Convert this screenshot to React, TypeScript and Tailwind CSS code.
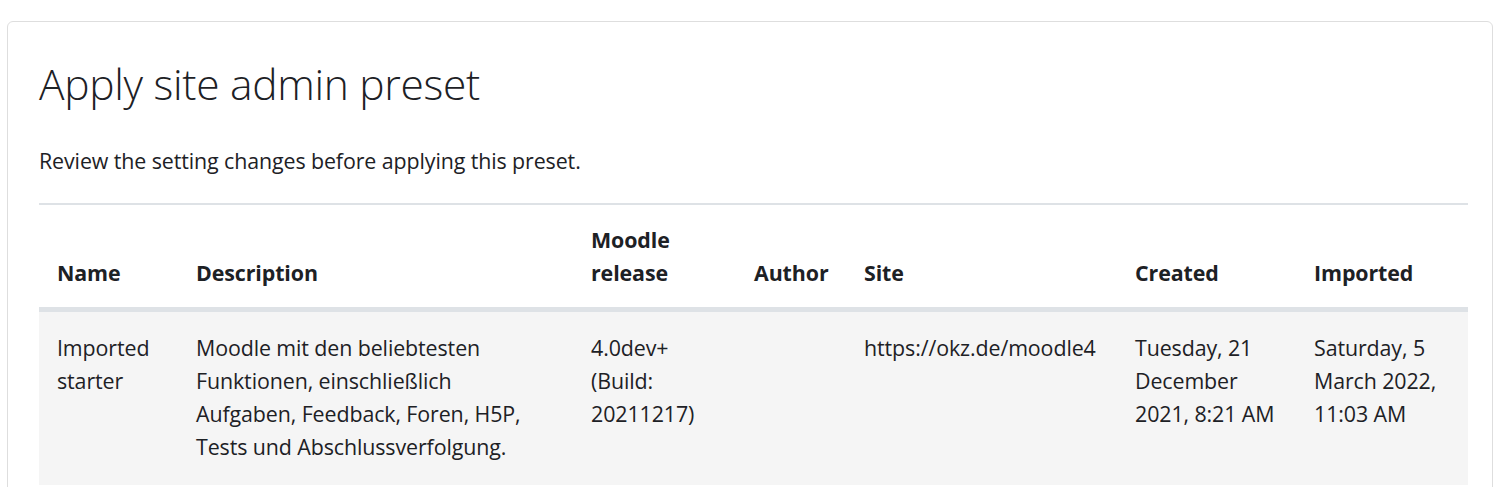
const rows = [
  {
    name: "Imported starter",
    description:
      "Moodle mit den beliebtesten Funktionen, einschließlich Aufgaben, Feedback, Foren, H5P, Tests und Abschlussverfolgung.",
    release: "4.0dev+ (Build: 20211217)",
    author: "",
    site: "https://okz.de/moodle4",
    created: "Tuesday, 21 December 2021, 8:21 AM",
    imported: "Saturday, 5 March 2022, 11:03 AM",
  },
];

export default function App() {
  return (
    <div className="bg-white h-[487px] overflow-hidden px-[7px] pt-[21px] font-['Open_Sans',sans-serif] text-[#1d2125]">
      <div className="border border-[#dedede] rounded-md px-[31px] pt-[36px] pb-[60px]">
        {/* Heading */}
        <h2 className="text-[42.5px] font-light leading-[1.2] tracking-[-0.3px] mb-[35px]">
          Apply site admin preset
        </h2>
        <p className="text-[21.4px] leading-[33px] mb-[26px] tracking-[-0.1px]">
          Review the setting changes before applying this preset.
        </p>

        {/* Preset table */}
        <table className="w-full table-fixed border-collapse text-[21.4px] leading-[33px] tracking-[-0.1px]">
          <colgroup>
            <col className="w-[139px]" />
            <col className="w-[395px]" />
            <col className="w-[163px]" />
            <col className="w-[110px]" />
            <col className="w-[271px]" />
            <col className="w-[179px]" />
            <col className="w-[172px]" />
          </colgroup>
          <thead>
            <tr className="border-t-2 border-b-[5px] border-[#dee2e6]">
              {["Name", "Description", "Moodle release", "Author", "Site", "Created", "Imported"].map((h) => (
                <th key={h} className="px-[18px] pt-[18px] pb-[18px] text-left align-bottom font-bold">
                  {h}
                </th>
              ))}
            </tr>
          </thead>
          <tbody>
            {rows.map((r) => (
              <tr key={r.name} className="bg-[#f5f5f5]">
                <td className="px-[18px] pt-[19px] pb-[22px] align-top">{r.name}</td>
                <td className="px-[18px] pt-[19px] pb-[22px] align-top">{r.description}</td>
                <td className="px-[18px] pt-[19px] pb-[22px] align-top">{r.release}</td>
                <td className="px-[18px] pt-[19px] pb-[22px] align-top">{r.author}</td>
                <td className="px-[18px] pt-[19px] pb-[22px] align-top">{r.site}</td>
                <td className="px-[18px] pt-[19px] pb-[22px] align-top">{r.created}</td>
                <td className="px-[18px] pt-[19px] pb-[22px] align-top">{r.imported}</td>
              </tr>
            ))}
          </tbody>
        </table>
      </div>
    </div>
  );
}
